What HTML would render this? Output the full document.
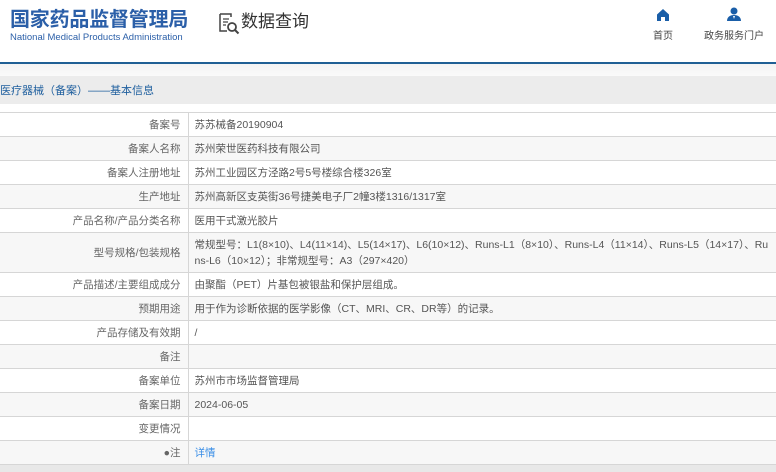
<!DOCTYPE html>
<html><head><meta charset="utf-8"><style>
*{margin:0;padding:0;box-sizing:border-box}
body{width:776px;height:472px;overflow:hidden;background:#fff;font-family:"Liberation Sans","Noto Sans CJK SC",sans-serif;color:#555;position:relative}
.t1{position:absolute;left:10px;top:5px;font-size:20px;font-weight:bold;color:#2b5fa8;letter-spacing:-0.2px;font-family:"Noto Sans CJK SC",sans-serif;line-height:26px}
.t2{position:absolute;left:10px;top:32px;font-size:9.5px;color:#2b5fa8;white-space:nowrap}
.q{position:absolute;left:218px;top:11px;font-size:17px;color:#333;line-height:22px}
.nav{position:absolute;top:27px;font-size:10px;color:#444;white-space:nowrap}
.bl{position:absolute;left:0;top:62px;width:776px;height:2px;background:#1f5f94}
.st{position:absolute;left:0;top:64px;width:776px;height:12px;background:linear-gradient(#f3f3f3,#fafafa)}
.gb{position:absolute;left:0;top:76px;width:776px;height:28px;background:#ececec}
.gb span{position:absolute;left:0;top:6px;font-size:11px;color:#1f5f9e}
table{position:absolute;left:0;top:112px;width:776px;border-collapse:collapse;font-size:10.5px}
td{border-top:1px solid #d6d6d6;border-bottom:1px solid #d6d6d6;height:24px;color:#555;vertical-align:middle}
td.l{width:188px;text-align:right;padding-right:7px;border-right:1px solid #d6d6d6;color:#666}
td.v{padding-left:6px;white-space:nowrap}
tr:nth-child(even) td{background:#f7f7f7}
.bot{position:absolute;left:0;top:465px;width:776px;height:7px;background:#e8e8e8}
</style></head><body>
<div class="t1">国家药品监督管理局</div>
<div class="t2">National Medical Products Administration</div>
<svg style="position:absolute;left:218px;top:13px" width="22" height="22" viewBox="0 0 22 22"><path d="M2 1h11v3M2 1v17h7" fill="none" stroke="#444" stroke-width="1.5"/><path d="M5 6h6M5 9h5M5 12h3" stroke="#444" stroke-width="1.3"/><circle cx="14" cy="14" r="4" fill="none" stroke="#444" stroke-width="1.8"/><path d="M17 17l3.5 3.5" stroke="#444" stroke-width="2"/></svg>
<div class="q" style="left:241px">数据查询</div>
<svg style="position:absolute;left:656px;top:8px" width="14" height="14" viewBox="0 0 14 14"><path d="M7 1L1 6.5V13h4V9h4v4h4V6.5z" fill="#1a5ea8"/></svg>
<div class="nav" style="left:653px">首页</div>
<svg style="position:absolute;left:726px;top:6px" width="16" height="16" viewBox="0 0 16 16"><circle cx="8" cy="5" r="3.5" fill="#1a5ea8"/><path d="M1 15c0-4 3-6 7-6s7 2 7 6z" fill="#1a5ea8"/><path d="M7 10l1 3 1-3z" fill="#fff"/></svg>
<div class="nav" style="left:704px">政务服务门户</div>
<div class="bl"></div><div class="st"></div>
<div class="gb"><span>医疗器械（备案）——基本信息</span></div>
<table>
<tr><td class="l">备案号</td><td class="v">苏苏械备20190904</td></tr>
<tr><td class="l">备案人名称</td><td class="v">苏州荣世医药科技有限公司</td></tr>
<tr><td class="l">备案人注册地址</td><td class="v">苏州工业园区方泾路2号5号楼综合楼326室</td></tr>
<tr><td class="l">生产地址</td><td class="v">苏州高新区支英街36号捷美电子厂2幢3楼1316/1317室</td></tr>
<tr><td class="l">产品名称/产品分类名称</td><td class="v">医用干式激光胶片</td></tr>
<tr><td class="l" style="height:40px">型号规格/包装规格</td><td class="v" style="line-height:16px">常规型号：L1(8×10)、L4(11×14)、L5(14×17)、L6(10×12)、Runs-L1（8×10）、Runs-L4（11×14）、Runs-L5（14×17）、Ru<br>ns-L6（10×12）；非常规型号：A3（297×420）</td></tr>
<tr><td class="l">产品描述/主要组成成分</td><td class="v">由聚酯（PET）片基包被银盐和保护层组成。</td></tr>
<tr><td class="l">预期用途</td><td class="v">用于作为诊断依据的医学影像（CT、MRI、CR、DR等）的记录。</td></tr>
<tr><td class="l">产品存储及有效期</td><td class="v">/</td></tr>
<tr><td class="l">备注</td><td class="v"></td></tr>
<tr><td class="l">备案单位</td><td class="v">苏州市市场监督管理局</td></tr>
<tr><td class="l">备案日期</td><td class="v">2024-06-05</td></tr>
<tr><td class="l">变更情况</td><td class="v"></td></tr>
<tr><td class="l"><span style="color:#666">●</span>注</td><td class="v" style="color:#3a8ee6">详情</td></tr>
</table>
<div class="bot"></div>
</body></html>
